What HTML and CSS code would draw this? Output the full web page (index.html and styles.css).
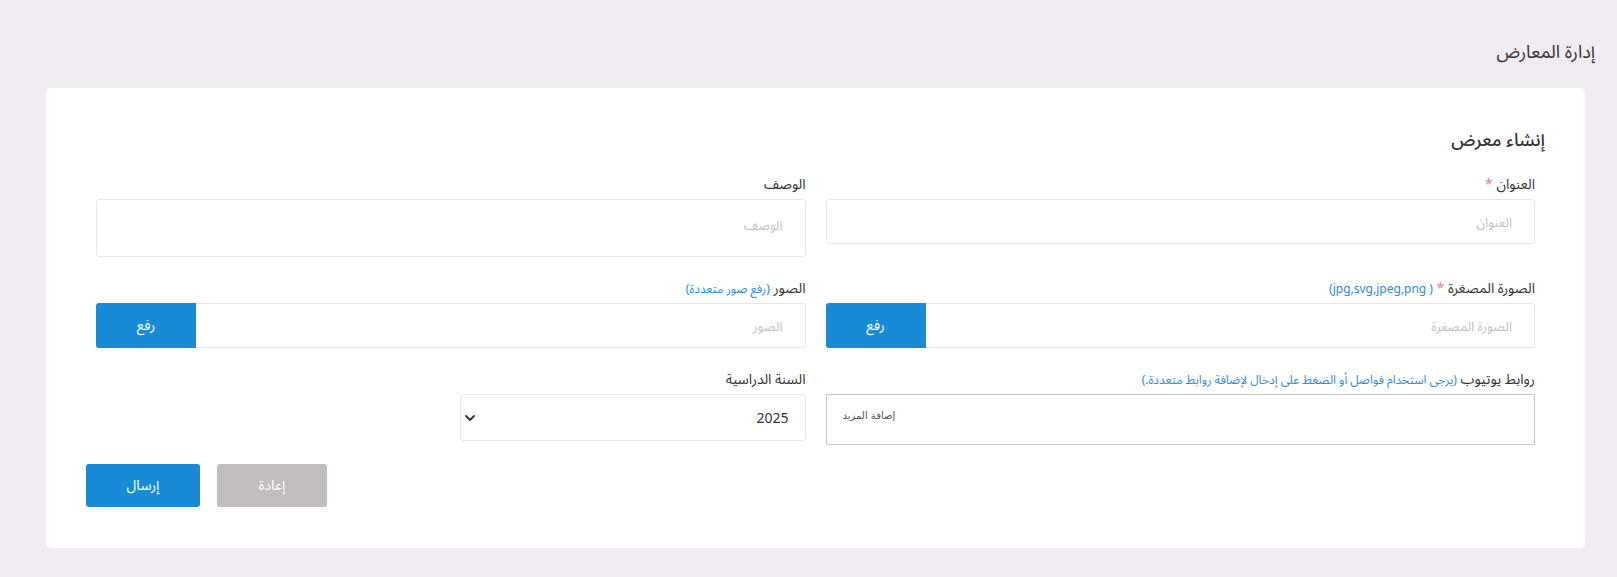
FILE: index.html
```html
<!DOCTYPE html>
<html lang="ar" dir="rtl">
<head>
  <meta charset="UTF-8">
  <meta name="viewport" content="width=device-width, initial-scale=1.0">
  <title>إدارة المعارض</title>
  <link rel="stylesheet" href="styles.css">
</head>
<body>
  <div class="page">
    <h1 class="page-title">إدارة المعارض</h1>

    <div class="card">
      <h2 class="card-title">إنشاء معرض</h2>

      <form class="gallery-form" onsubmit="return false;">
        <div class="form-grid">
          <div class="field">
            <label class="field-label">العنوان <span class="required">*</span></label>
            <input type="text" class="input" placeholder="العنوان">
          </div>

          <div class="field">
            <label class="field-label">الوصف</label>
            <textarea class="input textarea" placeholder="الوصف"></textarea>
          </div>

          <div class="field">
            <label class="field-label">الصورة المصغرة <span class="required">*</span> <span class="hint">( jpg,svg,jpeg,png)</span></label>
            <div class="upload-group">
              <input type="text" class="input" placeholder="الصورة المصغرة" readonly>
              <button type="button" class="upload-btn">رفع</button>
            </div>
          </div>

          <div class="field">
            <label class="field-label">الصور <span class="hint">(رفع صور متعددة)</span></label>
            <div class="upload-group">
              <input type="text" class="input" placeholder="الصور" readonly>
              <button type="button" class="upload-btn">رفع</button>
            </div>
          </div>

          <div class="field">
            <label class="field-label">روابط يوتيوب <span class="hint">(يرجى استخدام فواصل أو الضغط على إدخال لإضافة روابط متعددة.)</span></label>
            <div class="tags-box">
              <input type="text" class="tags-input" placeholder="إضافة المزيد">
            </div>
          </div>

          <div class="field">
            <div class="year-field">
              <label class="field-label">السنة الدراسية</label>
              <div class="select-wrap">
                <select class="input select">
                  <option>2025</option>
                  <option>2024</option>
                  <option>2023</option>
                </select>
                <svg class="select-arrow" viewBox="0 0 10 6" fill="none" stroke="#333" stroke-width="1.8">
                  <path d="M1 1l4 4 4-4" stroke-linecap="round" stroke-linejoin="round"></path>
                </svg>
              </div>
            </div>
          </div>
        </div>

        <div class="form-actions">
          <button type="submit" class="btn btn-primary">إرسال</button>
          <button type="reset" class="btn btn-muted">إعادة</button>
        </div>
      </form>
    </div>
  </div>
</body>
</html>
```

FILE: styles.css
```css
/* Base */
* {
  margin: 0;
  padding: 0;
  box-sizing: border-box;
}

body {
  font-family: "Noto Sans", "Noto Sans Arabic", "DejaVu Sans", sans-serif;
  background-color: #f0ecf2;
  color: #333;
  font-size: 14px;
}

.page {
  padding: 38px 22px 28px 46px;
}

.page-title {
  font-size: 18px;
  font-weight: 400;
  line-height: 27px;
  margin-bottom: 23px;
}

.card {
  background-color: #fff;
  border-radius: 5px;
  margin-right: 10px;
  padding: 38px 40px 41px;
}

.card-title {
  font-size: 18px;
  font-weight: 500;
  line-height: 27px;
  margin-bottom: 21px;
}

/* Form layout */
.form-grid {
  display: grid;
  grid-template-columns: 1fr 1fr;
  column-gap: 20px;
  row-gap: 21px;
  padding: 0 10px;
  align-items: start;
}

.field-label {
  display: block;
  height: 20px;
  line-height: 20px;
  margin-bottom: 5px;
  font-size: 14px;
  white-space: nowrap;
}

.required {
  color: #f27a9b;
}

.hint {
  color: #2a8ae0;
  font-size: 12px;
  line-height: 1;
}

.input {
  display: block;
  width: 100%;
  height: 45px;
  border: 1px solid #e6e6e6;
  border-radius: 3px;
  padding: 0 22px;
  font-family: inherit;
  font-size: 13px;
  color: #333;
  background-color: #fff;
  outline: none;
}

.input::placeholder {
  color: #c2c2c2;
}

.textarea {
  height: 58px;
  padding-top: 12px;
  resize: none;
}

/* Upload group */
.upload-group {
  display: flex;
}

.upload-group .input {
  flex: 1;
  border-radius: 0 3px 3px 0;
  border-left: none;
}

.upload-btn {
  width: 100px;
  height: 45px;
  border: none;
  border-radius: 3px 0 0 3px;
  background-color: #198bd6;
  color: #fff;
  font-family: inherit;
  font-size: 14px;
  cursor: pointer;
}

/* Tags input */
.tags-box {
  display: flex;
  justify-content: flex-end;
  height: 51px;
  border: 1px solid #c9c9c9;
  background-color: #fff;
  padding: 8px 16px;
}

.tags-input {
  border: none;
  outline: none;
  width: 70px;
  height: 24px;
  text-align: left;
  font-family: "DejaVu Sans", sans-serif;
  font-size: 10px;
  color: #555;
  background: transparent;
}

.tags-input::placeholder {
  color: #555;
}

/* Year select */
.year-field {
  width: 346px;
}

.select-wrap {
  position: relative;
}

.select {
  height: 47px;
  appearance: none;
  -webkit-appearance: none;
  padding: 0 16px;
  font-size: 14px;
}

.select-arrow {
  position: absolute;
  left: 5px;
  top: 21px;
  width: 10px;
  height: 6px;
  pointer-events: none;
}

/* Actions */
.form-actions {
  display: flex;
  direction: ltr;
  gap: 17px;
  margin-top: 19px;
}

.btn {
  height: 43px;
  border: none;
  border-radius: 3px;
  color: #fff;
  font-family: inherit;
  font-size: 14px;
  cursor: pointer;
}

.btn-primary {
  width: 114px;
  background-color: #198bd6;
}

.btn-muted {
  width: 110px;
  background-color: #c3bdbd;
}
```
